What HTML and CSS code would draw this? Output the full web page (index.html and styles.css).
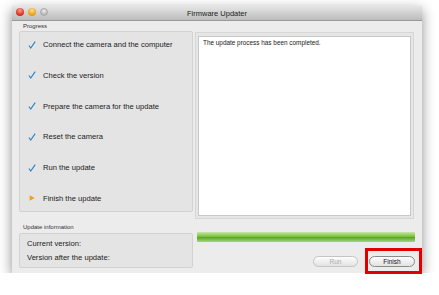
FILE: index.html
```html
<!DOCTYPE html>
<html lang="en">
<head>
  <meta charset="UTF-8" />
  <meta name="viewport" content="width=device-width, initial-scale=1.0"/>
  <title>Firmware Updater</title>
  <link rel="stylesheet" href="styles.css">
</head>
<body>
  <div class="window">
    <div class="titlebar">
      <div class="lights">
        <span class="light red"></span>
        <span class="light orange"></span>
        <span class="light gray"></span>
      </div>
      <div class="title">Firmware Updater</div>
    </div>

    <div class="content">
      <div class="left">
        <div class="group-label">Progress</div>
        <ul class="steps">
          <li><svg class="icon" viewBox="0 0 10 10"><path d="M1.2 5.6 L3.4 8.8 L9 0.8" /></svg>Connect the camera and the computer</li>
          <li><svg class="icon" viewBox="0 0 10 10"><path d="M1.2 5.6 L3.4 8.8 L9 0.8" /></svg>Check the version</li>
          <li><svg class="icon" viewBox="0 0 10 10"><path d="M1.2 5.6 L3.4 8.8 L9 0.8" /></svg>Prepare the camera for the update</li>
          <li><svg class="icon" viewBox="0 0 10 10"><path d="M1.2 5.6 L3.4 8.8 L9 0.8" /></svg>Reset the camera</li>
          <li><svg class="icon" viewBox="0 0 10 10"><path d="M1.2 5.6 L3.4 8.8 L9 0.8" /></svg>Run the update</li>
          <li><svg class="icon" viewBox="0 0 10 10"><polygon class="arrow" points="2,1.5 8.5,5 2,8.5" /></svg>Finish the update</li>
        </ul>

        <div class="group-label info-label">Update information</div>
        <div class="info">
          <div>Current version:</div>
          <div>Version after the update:</div>
        </div>
      </div>

      <div class="right">
        <div class="log-frame">
          <div class="log">The update process has been completed.</div>
        </div>
        <div class="progress"></div>
        <div class="buttons">
          <button class="btn" disabled>Run</button>
          <button class="btn default">Finish</button>
        </div>
      </div>
    </div>
  </div>

  <div class="highlight"></div>
</body>
</html>
```

FILE: styles.css
```css
body {
  margin: 0;
  background: #fff;
  font-family: 'Liberation Sans', Arial, sans-serif;
  color: #1a1a1a;
}

.window {
  margin: 6px 0 0 12px;
  width: 410px;
  height: 267px;
  background: #ececec;
  box-shadow: 0 4px 12px rgba(0, 0, 0, 0.45);
  display: flex;
  flex-direction: column;
}

.titlebar {
  height: 14px;
  position: relative;
  background: linear-gradient(#e6e6e6, #bcbcbc);
  border-bottom: 1px solid #999;
  display: flex;
  align-items: center;
  justify-content: center;
}

.lights {
  position: absolute;
  left: 4px;
  top: 2px;
  display: flex;
  gap: 4px;
}

.light {
  width: 8px;
  height: 8px;
  border-radius: 50%;
}

.red {
  background: radial-gradient(circle at 50% 30%, #ff9a8a, #d42a1c 70%);
}

.orange {
  background: radial-gradient(circle at 50% 30%, #ffe08a, #e79a14 70%);
}

.gray {
  background: radial-gradient(circle at 50% 30%, #eee, #b8b8b8 70%);
  border: 1px solid #aaa;
  width: 6px;
  height: 6px;
}

.title {
  font-size: 7.5px;
  color: #222;
}

.content {
  display: flex;
  gap: 2px;
  padding: 0 8px 0 7px;
}

.left {
  width: 174px;
  display: flex;
  flex-direction: column;
}

.group-label {
  font-size: 6px;
  color: #333;
  height: 10px;
  line-height: 11px;
  padding-left: 4px;
}

.steps {
  list-style: none;
  margin: 0;
  padding: 0 0 0 8px;
  height: 179px;
  background: #e4e4e4;
  border: 1px solid #d2d2d2;
  border-radius: 2px;
  font-size: 7.6px;
}

.steps li {
  height: 9px;
  padding: 8px 0 13.8px;
  display: flex;
  align-items: center;
  gap: 7px;
  line-height: 9px;
}

.icon {
  width: 8px;
  height: 8px;
}

.icon path {
  fill: none;
  stroke: #2a83c4;
  stroke-width: 1.4;
}

.icon .arrow {
  fill: #f0a020;
}

.info-label {
  margin-top: 10px;
  height: 11px;
}

.info {
  height: 35px;
  box-sizing: border-box;
  background: #e4e4e4;
  border: 1px solid #d2d2d2;
  border-radius: 2px;
  font-size: 7.6px;
  padding-left: 7px;
  display: flex;
  flex-direction: column;
  justify-content: center;
  gap: 5px;
}

.right {
  flex: 1;
  display: flex;
  flex-direction: column;
  padding-top: 11px;
}

.log-frame {
  height: 187px;
  box-sizing: border-box;
  border: 1px solid #d6d6d6;
  background: #e6e6e6;
  padding: 3px 2px 2px 2px;
}

.log {
  height: 100%;
  box-sizing: border-box;
  background: #fff;
  border: 1px solid #c8c8c8;
  font-size: 6.4px;
  padding: 2px 4px;
}

.progress {
  margin: 13px -1px 0 2px;
  height: 10px;
  border-radius: 1px;
  background: linear-gradient(#c8e6a4, #7ac23e 45%, #5aa82a 55%, #a6d67a);
}

.buttons {
  margin-top: 14px;
  display: flex;
  justify-content: flex-end;
  gap: 11px;
  margin-right: -1px;
}

.btn {
  height: 11px;
  width: 45px;
  padding: 0;
  border: 1px solid #8a8a8a;
  border-radius: 6px;
  background: linear-gradient(#fdfdfd, #e2e2e2);
  font-family: 'Liberation Sans', Arial, sans-serif;
  font-size: 6.5px;
  line-height: 9px;
  color: #111;
}

.btn:disabled {
  border-color: #c4c4c4;
  color: #aaa;
}

.default {
  width: 46px;
}

.highlight {
  position: absolute;
  left: 365px;
  top: 248px;
  width: 51px;
  height: 20px;
  border: 3px solid #e00000;
}
```
